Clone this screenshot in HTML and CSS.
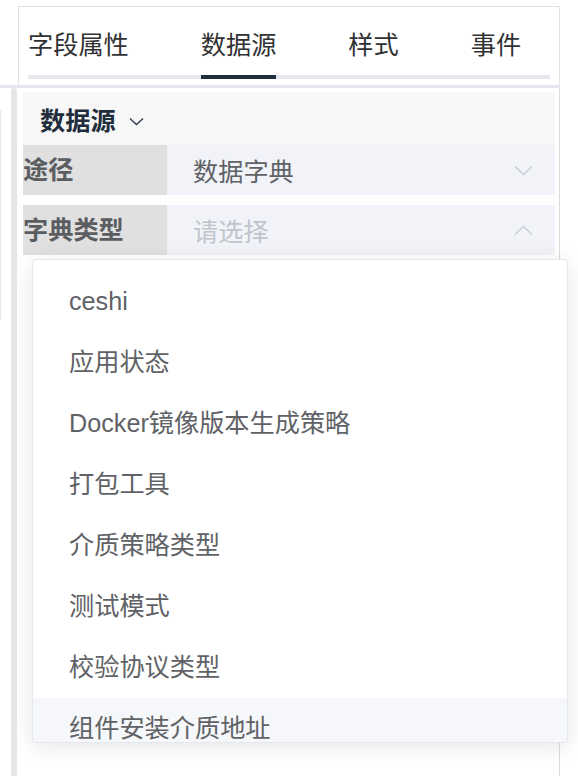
FILE: index.html
```html
<!DOCTYPE html>
<html lang="zh-CN">
<head>
<meta charset="utf-8">
<title>数据源</title>
<link rel="stylesheet" href="styles.css">
</head>
<body>
<div class="page">
  <div class="top">
    <div class="tabs-panel">
      <div class="tabs-nav">
        <div class="tab">字段属性</div>
        <div class="tab active">数据源</div>
        <div class="tab">样式</div>
        <div class="tab">事件</div>
      </div>
    </div>
  </div>
  <div class="separator"></div>
  <div class="bottom">
    <div class="gutter">
      <div class="thin-line"></div>
      <div class="scroll-bar"></div>
    </div>
    <div class="content">
      <div class="section-head">
        <span class="section-title">数据源</span>
        <svg class="head-arrow" width="15" height="9" viewBox="0 0 15 9"><polyline points="1,1.5 7.5,7.5 14,1.5" fill="none" stroke="#2b3a4d" stroke-width="1.3"/></svg>
      </div>
      <div class="form-row">
        <div class="label">途径</div>
        <div class="select">
          <span class="value">数据字典</span>
          <svg class="sel-arrow" width="19" height="11" viewBox="0 0 19 11"><polyline points="1,1.5 9.5,9.5 18,1.5" fill="none" stroke="#c8ccd4" stroke-width="1.4"/></svg>
        </div>
      </div>
      <div class="form-row">
        <div class="label">字典类型</div>
        <div class="select">
          <span class="placeholder">请选择</span>
          <svg class="sel-arrow" width="19" height="11" viewBox="0 0 19 11"><polyline points="1,9.5 9.5,1.5 18,9.5" fill="none" stroke="#c8ccd4" stroke-width="1.4"/></svg>
        </div>
      </div>
      <div class="dropdown">
        <ul class="options">
          <li>ceshi</li>
          <li>应用状态</li>
          <li>Docker镜像版本生成策略</li>
          <li>打包工具</li>
          <li>介质策略类型</li>
          <li>测试模式</li>
          <li>校验协议类型</li>
          <li class="hover">组件安装介质地址</li>
        </ul>
      </div>
    </div>
  </div>
</div>
</body>
</html>
```
FILE: styles.css
```css
* { box-sizing: border-box; }
html, body { margin: 0; padding: 0; background: #fff; }
body {
  font-family: "Liberation Sans", "Noto Sans CJK SC", sans-serif;
  width: 578px;
  height: 776px;
  overflow: hidden;
}
.page {
  width: 560px;
  height: 776px;
  padding-top: 6px;
  display: flex;
  flex-direction: column;
}
.top { display: flex; padding-left: 18px; }
.tabs-panel {
  flex: 1;
  border: 1px solid #e2e2e2;
  border-bottom: none;
  padding: 0 9px 6px 9px;
}
.tabs-nav {
  display: flex;
  border-bottom: 4px solid #e4e7ed;
}
.tab {
  position: relative;
  padding: 8px 36px 0 36px;
  height: 68px;
  line-height: 60px;
  font-size: 25.2px;
  color: #303133;
  white-space: nowrap;
}
.tab:first-child { padding-left: 0; }
.tab:last-child { padding-right: 0; }
.tab.active::after {
  content: "";
  position: absolute;
  left: 36px;
  right: 36px;
  bottom: -4px;
  height: 4px;
  background: #1f2d3d;
}
.separator { height: 3px; background: #e4e7ed; }
.bottom {
  flex: 1;
  display: flex;
  border-right: 1px solid #dcdcdc;
}
.gutter { width: 23px; display: flex; }
.thin-line {
  width: 1px;
  margin-top: 22px;
  height: 210px;
  background: #e8e8e8;
}
.scroll-bar {
  width: 6px;
  margin-left: 10px;
  background: #e6e6e6;
  border-radius: 3px 3px 0 0;
}
.content {
  flex: 1;
  margin-right: 4px;
  padding-top: 4px;
  position: relative;
}
.section-head {
  height: 53px;
  background: #f7f7f7;
  padding: 5px 0 0 17px;
  display: flex;
  align-items: center;
  gap: 13px;
}
.section-head { align-items: center; }
.section-title {
  font-size: 25.2px;
  font-weight: 700;
  color: #1f2d3d;
  line-height: 48px;
}
.form-row {
  display: flex;
  height: 50px;
  margin-bottom: 10px;
}
.label {
  width: 144px;
  background: #e0e0e0;
  font-size: 25.2px;
  font-weight: 700;
  color: #5b5d61;
  line-height: 50px;
  white-space: nowrap;
}
.select {
  flex: 1;
  background: #f1f3f8;
  display: flex;
  align-items: center;
  justify-content: space-between;
  padding: 0 22px 0 26px;
  font-size: 25.2px;
}
.value { color: #606266; }
.placeholder { color: #c0c4cc; }
.dropdown {
  position: absolute;
  left: 9px;
  top: 171px;
  width: 536px;
  height: 484px;
  background: #fff;
  border: 1px solid #e4e7ed;
  border-radius: 4px;
  box-shadow: 0 4px 22px rgba(0, 0, 0, 0.1);
  overflow: hidden;
}
.options {
  list-style: none;
  margin: 0;
  padding: 11px 0 0 0;
}
.options li {
  height: 61px;
  line-height: 61px;
  padding: 0 36px;
  font-size: 25.2px;
  color: #606266;
  white-space: nowrap;
}
.options li.hover { background: #f5f7fa; }
```
